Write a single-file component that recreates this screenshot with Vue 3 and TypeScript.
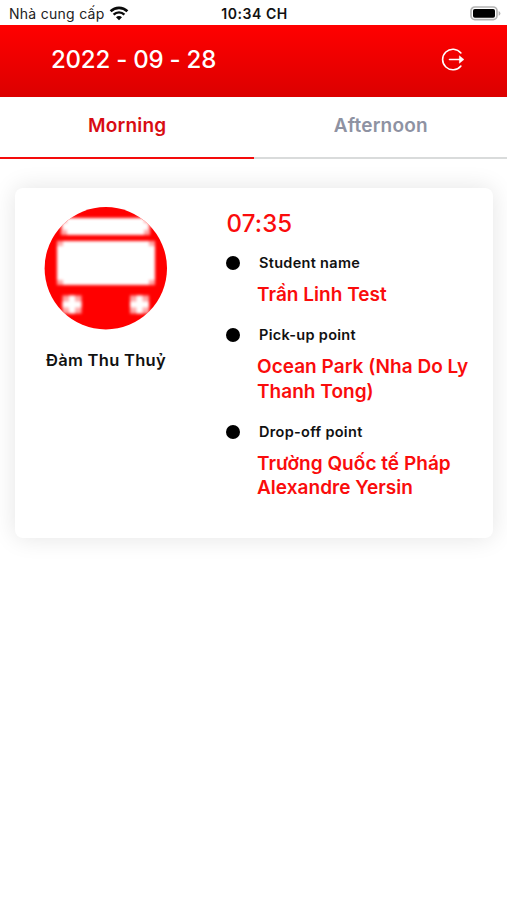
<script setup lang="ts">
import { ref } from 'vue'

interface Detail {
  label: string
  lines: string[]
}

const tabs: string[] = ['Morning', 'Afternoon']
const active = ref<number>(0)

const details: Detail[] = [
  { label: 'Student name', lines: ['Trần Linh Test'] },
  { label: 'Pick-up point', lines: ['Ocean Park (Nha Do Ly', 'Thanh Tong)'] },
  { label: 'Drop-off point', lines: ['Trường Quốc tế Pháp', 'Alexandre Yersin'] },
]
</script>

<template>
  <div class="screen">
    <div class="status">
      <div class="carrier">
        <span class="carrier-name">Nhà cung cấp</span>
        <svg class="wifi" width="20" height="15" viewBox="0 0 20 15">
          <path d="M1.6 5.3a12 12 0 0 1 16.8 0" fill="none" stroke="#0a0a0a" stroke-width="2.6" />
          <path d="M4.6 8.6a7.7 7.7 0 0 1 10.8 0" fill="none" stroke="#0a0a0a" stroke-width="2.4" />
          <path d="M10 14.2 7 11.2a4.2 4.2 0 0 1 6 0z" fill="#0a0a0a" />
        </svg>
      </div>
      <span class="clock">10:34 CH</span>
      <svg class="battery" width="31" height="15" viewBox="0 0 31 15">
        <rect x="1" y="1" width="26" height="12.6" rx="3.8" fill="#fff" stroke="#b4b4b4" stroke-width="1.7" />
        <rect x="3" y="3" width="22" height="8.8" rx="1.8" fill="#000" />
        <path d="M28.6 5v4.8q1.8-.7 1.8-2.4T28.6 5z" fill="#b4b4b4" />
      </svg>
    </div>

    <header class="header">
      <h1 class="date">2022 - 09 - 28</h1>
      <svg class="logout" width="24" height="24" viewBox="0 0 24 24" fill="none" stroke="#fff">
        <path d="M19.9 5a10.3 10.3 0 1 0 0 13" stroke-width="1.6" stroke-linecap="round" />
        <path d="M8.5 11.5H20" stroke-width="1.6" stroke-linecap="round" />
        <path d="m18.4 7.8 4.5 3.7-4.5 3.7z" fill="#fff" stroke-width=".5" stroke-linejoin="round" />
      </svg>
    </header>

    <nav class="tabs">
      <button
        v-for="(tab, i) in tabs"
        :key="tab"
        class="tab"
        :class="{ active: active === i }"
        @click="active = i"
      >
        {{ tab }}
      </button>
    </nav>

    <main class="card">
      <section class="monitor">
        <svg class="bus" width="124" height="124" viewBox="0 0 124 124">
          <defs>
            <clipPath id="disc"><circle cx="61.8" cy="62.3" r="61.2" /></clipPath>
            <filter id="soft" x="-20%" y="-20%" width="140%" height="140%">
              <feGaussianBlur stdDeviation="1.7" />
            </filter>
          </defs>
          <g clip-path="url(#disc)">
            <rect width="124" height="124" fill="#f00" />
            <g fill="#fff" filter="url(#soft)">
              <rect x="17" y="12" width="89" height="17" opacity="0.65" />
              <path d="M23 12H100V17H104V24H100V29H23V24H19V17H23z" />
              <rect x="13" y="35" width="98" height="44" opacity="0.65" />
              <path d="M19 35H105V40H111V74H105V79H19V74H13V40H19z" />
              <rect x="18.5" y="89.5" width="19" height="18" opacity="0.65" />
              <path d="M25 89.5H31V95.500H37.5V101.500H31V107.5H25V101.500H18.5V95.500H25z" />
              <rect x="86" y="89.5" width="19" height="18" opacity="0.65" />
              <path d="M92.500 89.5H98.500V95.500H105V101.500H98.500V107.5H92.500V101.500H86V95.500H92.500z" />
            </g>
          </g>
        </svg>
        <p class="name">Đàm Thu Thuỷ</p>
      </section>

      <section class="trip">
        <p class="time">07:35</p>
        <div v-for="d in details" :key="d.label" class="detail">
          <div class="label-row">
            <span class="dot"></span>
            <span class="label">{{ d.label }}</span>
          </div>
          <p class="value">
            <span v-for="line in d.lines" :key="line" class="line">{{ line }}</span>
          </p>
        </div>
      </section>
    </main>
  </div>
</template>

<style>
body {
  background: #fff;
}
</style>

<style scoped>
.screen {
  height: 900px;
  overflow: hidden;
  background: #fff;
  color: #111;
  font-family: Inter, "Liberation Sans", sans-serif;
}
p,
h1 {
  margin: 0;
}
.status {
  display: grid;
  grid-template-columns: 1fr auto 1fr;
  align-items: center;
  height: 25px;
  padding: 0 6px 0 9px;
  box-sizing: border-box;
}
.carrier {
  display: flex;
  align-items: center;
  gap: 4.5px;
}
.carrier-name {
  font-size: 14px;
  letter-spacing: 0.27px;
  line-height: 25px;
  color: #222;
  padding-top: 1px;
}
.clock {
  font-size: 14px;
  font-weight: 600;
  letter-spacing: 0.55px;
  line-height: 25px;
  padding: 1px 1px 0 0;
}
.battery {
  justify-self: end;
}
.header {
  display: flex;
  justify-content: space-between;
  align-items: center;
  height: 72px;
  padding: 0 42px 3px 51px;
  box-sizing: border-box;
  background: linear-gradient(#ff0000, #db0000);
}
.date {
  font-size: 24px;
  font-weight: 500;
  letter-spacing: -0.22px;
  line-height: 30px;
  color: #fff;
}
.tabs {
  display: grid;
  grid-template-columns: 1fr 1fr;
  height: 61.5px;
}
.tab {
  padding: 0 0 1.5px 1px;
  border: 0;
  border-bottom: 2px solid #d9dbdb;
  background: none;
  font: 600 19px/24px Inter, "Liberation Sans", sans-serif;
  letter-spacing: 0.2px;
  color: #8e92a2;
}
.tab.active {
  color: #d80c12;
  border-bottom-color: #f40c0c;
}
.card {
  display: grid;
  grid-template-columns: 182px 1fr;
  height: 350px;
  margin: 29.5px 14px 0 15px;
  padding: 18px 0 0;
  box-sizing: border-box;
  border-radius: 8px;
  background: #fff;
  box-shadow: 0 0 24px rgba(0, 0, 0, 0.11);
}
.monitor {
  display: flex;
  flex-direction: column;
  align-items: center;
}
.name {
  margin-top: 18px;
  font-size: 16.5px;
  font-weight: 600;
  letter-spacing: 0.3px;
  line-height: 24px;
}
.trip {
  padding-left: 29px;
}
.time {
  margin: 1px 0 6px 0.5px;
  font-size: 24px;
  font-weight: 500;
  letter-spacing: 0.15px;
  line-height: 34px;
  color: #fa0c0c;
}
.detail {
  margin-bottom: 12px;
}
.label-row {
  display: flex;
  align-items: center;
  height: 32px;
  gap: 19px;
}
.dot {
  width: 14px;
  height: 14px;
  border-radius: 50%;
  background: #000;
}
.label {
  font-size: 14.5px;
  font-weight: 600;
  letter-spacing: 0.3px;
  line-height: 20px;
}
.value {
  margin-top: 4px;
  padding-left: 31px;
  color: #fa0c0c;
  font-size: 19px;
  font-weight: 600;
  letter-spacing: 0.03px;
  line-height: 24.3px;
}
.line {
  display: block;
  white-space: nowrap;
}
</style>
